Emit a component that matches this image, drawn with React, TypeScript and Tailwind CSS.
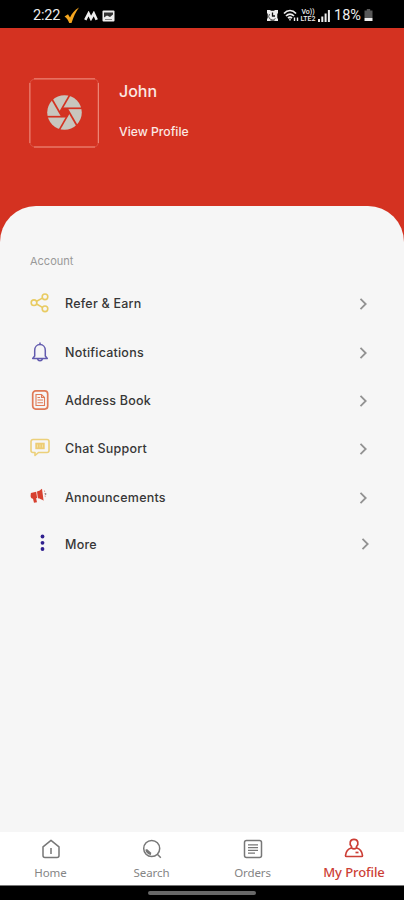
import type { ReactNode } from 'react'

type MenuItem = {
  label: string
  icon: ReactNode
  row?: string
  arrow?: string
}

function ShareIcon() {
  return (
    <svg width="20" height="20" viewBox="0 0 20 20" fill="none" stroke="#e8cb62" strokeWidth="1.6">
      <circle cx="4" cy="9.7" r="2.8" />
      <circle cx="15" cy="3.8" r="2.8" />
      <circle cx="15" cy="15.8" r="2.8" />
      <path d="M6.6 8.3l5.8-3.2M6.6 11l5.8 3.4" />
    </svg>
  )
}

function BellIcon() {
  return (
    <svg width="20" height="20" viewBox="0 0 20 20" fill="none" stroke="#625bae" strokeWidth="1.5" strokeLinejoin="round">
      <path d="M4.7 14V8.4C4.7 4.8 7 2.6 10 2.6s5.3 2.2 5.3 5.8V14l2 2.4H2.7L4.7 14z" />
      <path d="M10 .4v2.200M7.5 16.8c.4 1.4 1.3 2 2.5 2s2.1-.6 2.5-2" />
    </svg>
  )
}

function AddressIcon() {
  return (
    <svg width="20" height="20" viewBox="0 0 20 20" fill="none" stroke="#e07a57">
      <rect x="2.7" y=".9" width="15" height="18.2" rx="3" strokeWidth="1.7" />
      <path d="M6 4.500h5.500l3 3v8H6z" strokeWidth="1.1" />
      <path d="M11.500 4.500v3h3M7.500 7.500h2.500M7.500 10h5.500M7.500 12.700h5.500" strokeWidth="1.1" />
    </svg>
  )
}

function ChatIcon() {
  return (
    <svg width="20" height="20" viewBox="0 0 20 20" fill="none" stroke="#ecd07a" strokeWidth="1.6" strokeLinejoin="round">
      <path d="M3 1.500h14a2 2 0 012 2v9a2 2 0 01-2 2H8.500L5 17.500v-3H3a2 2 0 01-2-2v-9a2 2 0 012-2z" />
      <rect x="5.300" y="4.700" width="9.400" height="6.500" fill="#edcc75" stroke="none" />
      <path d="M7.500 6.500v3M10 6.500v3M12.500 6.500v3" stroke="#f5e5ac" strokeWidth=".8" />
    </svg>
  )
}

function MegaphoneIcon() {
  return (
    <svg width="20" height="20" viewBox="0 0 20 20" fill="#d7402f">
      <path d="M.9 6l5.300-1.200.9 6.200-1 .2.900 4-3 .5-1-4C1.600 11.600.6 10.700.6 9z" />
      <path d="M7 4.600C9.200 4 10.600 3 12 1.800l1.600 12c-1.800-1.400-3.600-2.100-5.700-2.500z" />
      <path d="M14.500 3.500l.9 7.500" stroke="#e69b92" strokeWidth="1" strokeDasharray="1.500 1" />
      <circle cx="15.700" cy="7" r=".7" fill="#555" />
    </svg>
  )
}

function DotsIcon() {
  return (
    <svg width="20" height="20" viewBox="0 0 20 20" fill="#30208f">
      <circle cx="12.500" cy="3.500" r="1.900" />
      <circle cx="12.500" cy="9.800" r="1.900" />
      <circle cx="12.500" cy="16" r="1.900" />
    </svg>
  )
}

function Chevron() {
  return (
    <svg width="9" height="12" viewBox="0 0 9 12" fill="none" stroke="#929292" strokeWidth="1.800">
      <path d="M1.500 .8L6.700 6l-5.200 5.200" />
    </svg>
  )
}

const menu: MenuItem[] = [
  { label: 'Refer & Earn', icon: <ShareIcon /> },
  { label: 'Notifications', icon: <BellIcon /> },
  { label: 'Address Book', icon: <AddressIcon /> },
  { label: 'Chat Support', icon: <ChatIcon /> },
  { label: 'Announcements', icon: <MegaphoneIcon /> },
  { label: 'More', icon: <DotsIcon />, row: 'h-[45px]', arrow: 'pr-[34px]' },
]

function StatusBar() {
  return (
    <div className="flex h-7 shrink-0 items-center justify-between bg-black pl-[33px] pr-[31px] pt-[3px] text-[#eeeeee]">
      <div className="flex items-center">
        <span className="w-[31px] whitespace-nowrap font-['Roboto','Noto_Sans',sans-serif] text-[14.500px] tracking-[-0.200px]">2:22</span>
        <svg width="16" height="17" viewBox="0 0 16 17" fill="#f4a51f">
          <path d="M.5 9.500l3.500-2.200 2 3.200C8 6.500 10.500 3 15 .5c-3.500 4.500-5.300 9-7.500 15.500H5.200C4.200 13 2.800 11 .5 9.500z" />
        </svg>
        <svg className="ml-1" width="14" height="10" viewBox="0 0 14 10" fill="none" stroke="currentColor" strokeWidth="2.600">
          <path d="M1.300 8.800L4.600 2.500l2.400 5 2.800-5 2.900 6.300" />
        </svg>
        <svg className="ml-1" width="13" height="12" viewBox="0 0 13 12">
          <rect x=".5" y=".5" width="12" height="11" rx="1" fill="#eee" />
          <path d="M2 2.500h9v2L8 7 5 5.500 2 7.500z" fill="#333" />
          <path d="M3 9.500h7" stroke="#888" />
        </svg>
      </div>
      <div className="flex items-center">
        <svg width="13" height="13" viewBox="0 0 13 13">
          <path d="M1 1h3l1 .7h3L9 1h3v3l-.7 1v4l.7 1v2H9l-1-.5H5L4 12H1v-2l.7-1V5L1 4z" fill="#eee" />
          <path d="M6.500 3.500V7H9" fill="none" stroke="#111" strokeWidth="1.300" />
          <path d="M3.500 5a3.500 3.500 0 006 4.500" fill="none" stroke="#555" />
        </svg>
        <svg className="ml-1" width="17" height="13" viewBox="0 0 17 13" fill="none" stroke="currentColor" strokeWidth="1.700">
          <path d="M1 4.500c3.500-4 8.500-4 12 0M3 7c2.400-2.500 5.600-2.500 8 0M5 9.200c1.200-1.200 2.800-1.200 4 0" />
          <path d="M7 9.500v2M11.500 12V8.500M14.500 8.500V12" strokeWidth="1.400" />
        </svg>
        <div className="flex h-[14px] w-[16px] flex-col items-center font-['Roboto',sans-serif] text-[7px] font-medium leading-[7px]">
          <span>Vo))</span>
          <span>LTE2</span>
        </div>
        <svg className="ml-[2px]" width="12" height="12" viewBox="0 0 12 12" fill="currentColor">
          <path d="M0 9h2v3H0zM3.300 6.500h2V12h-2zM6.600 3.500h2V12h-2zM9.900 0h2v12h-2z" />
        </svg>
        <span className="ml-[4px] w-[30px] whitespace-nowrap font-['Roboto','Noto_Sans',sans-serif] text-[14.500px]">18%</span>
        <svg width="9" height="13" viewBox="0 0 9 13">
          <path d="M2.800 0h3.400v1.500H8.500V9h-8V1.500h2.300z" fill="#585858" />
          <path d="M.5 9h8v3h-8z" fill="#eee" />
        </svg>
      </div>
    </div>
  )
}

// each blade edge is one side of the centre hexagon, run out to the rim
const bladeAngles = [0, 60, 120, 180, 240, 300]

function Avatar() {
  return (
    <div className="relative flex h-[70px] w-[70px] items-center justify-center">
      <svg className="absolute inset-0" width="70" height="70" viewBox="0 0 70 70" fill="none" stroke="#f29a8b" strokeWidth="1">
        <path d="M5 .9h61M5 69h61M.9 5v60M69.300 5v60" />
        <path d="M.9 5Q1.500 2 5 1M66 1q3 1 3.300 4M.9 65q.6 3 4.100 4M66 69q3-1 3.300-4" stroke="#dc5242" />
      </svg>
      <svg width="36" height="36" viewBox="-18.500 -17.500 36 36">
        <circle r="17.300" fill="#c8c6be" />
        <path d="M-2.500-4.400h5L5.100 0 2.500 4.400h-5L-5.100 0z" fill="#d43221" />
        {bladeAngles.map((angle) => (
          <path key={angle} d="M-2.500-4.200H18" transform={`rotate(${angle})`} stroke="#d43221" strokeWidth="1.700" />
        ))}
      </svg>
    </div>
  )
}

function BottomNav() {
  return (
    <nav className="grid h-[53px] shrink-0 grid-cols-4 bg-white font-['Noto_Sans',sans-serif] text-[11.500px] tracking-[-0.100px] text-[#858585]">
      <div className="flex flex-col items-center pt-[7px]">
        <svg width="20" height="20" viewBox="0 0 20 20" fill="none" stroke="#777" strokeWidth="1.500" strokeLinejoin="round">
          <path d="M2 7.800L10 1.300l8 6.500v8.700a2 2 0 01-2 2H4a2 2 0 01-2-2zM10 9v6" />
        </svg>
        <span className="mt-[6px] leading-4">Home</span>
      </div>
      <div className="flex flex-col items-center pt-[7px]">
        <svg width="20" height="20" viewBox="0 0 20 20" fill="none" stroke="#777" strokeWidth="1.500">
          <circle cx="9.700" cy="9.500" r="8" />
          <path d="M15.300 15.200l3.500 3.500M4 10.500c.6 2.500 2.200 4.200 5 4.700M4.500 10.500l4.500 4" />
        </svg>
        <span className="mt-[6px] leading-4">Search</span>
      </div>
      <div className="flex flex-col items-center pt-[7px]">
        <svg width="20" height="20" viewBox="0 0 20 20" fill="none" stroke="#777" strokeWidth="1.500">
          <rect x="1.500" y="1.500" width="17" height="17" rx="2" />
          <path d="M5 5.800h10M5 8.600h10M5 11.400h10M5 14.200h7" strokeWidth="1.200" />
        </svg>
        <span className="mt-[6px] leading-4">Orders</span>
      </div>
      <div className="flex flex-col items-center pl-px pt-[6px] text-[#cc3e35]">
        <svg width="20" height="20" viewBox="0 0 20 20" fill="none" stroke="currentColor" strokeWidth="1.700" strokeLinejoin="round">
          <path d="M7.500 10C3.800 10.800 2 13 1.500 17.500q0 1 1 1h15q1 0 1-1C18 13 16.200 10.800 12.500 10" />
          <path d="M7.500 10V8.500C5 6 5.800 1.400 10 1.400s5 4.600 2.500 7.100V10q-2.500 1.700-5 0z" />
          <path d="M11.500 14.500h3" />
        </svg>
        <span className="mt-[6px] whitespace-nowrap text-[13px] font-medium leading-4">My Profile</span>
      </div>
    </nav>
  )
}

export default function App() {
  return (
    <div className="flex h-[900px] w-[404px] flex-col overflow-hidden bg-[#d43221]">
      <StatusBar />
      <header className="flex h-[178px] shrink-0 pl-[29px] pt-[50px]">
        <Avatar />
        <div className="flex flex-col pl-5 font-['Inter',sans-serif] text-[#fbe9e4]">
          <span className="mt-[3px] text-[16px] font-medium leading-5">John</span>
          <span className="mt-[23px] text-[12.200px] font-medium leading-4">View Profile</span>
        </div>
      </header>
      <main className="min-h-0 flex-1 rounded-t-[36px] bg-[#f6f6f6] pt-[47px] font-['Inter',sans-serif]">
        <h2 className="pl-[30px] text-[11px] leading-4 text-[#999999]">Account</h2>
        <ul className="mt-[11px]">
          {menu.map((item) => (
            <li key={item.label} className={`flex items-center pl-[30px] ${item.row ?? 'h-[48.400px]'} ${item.arrow ?? 'pr-[36px]'}`}>
              <span className="-mt-0.5 w-[35px]">{item.icon}</span>
              <span className="flex-1 pt-px text-[12.500px] font-medium tracking-[0.220px] text-[#373737]">{item.label}</span>
              <Chevron />
            </li>
          ))}
        </ul>
      </main>
      <BottomNav />
      <footer className="flex h-[15px] shrink-0 justify-center border-t border-[#777777] bg-black pt-[5px]">
        <div className="h-[4px] w-[108px] rounded-full bg-[#686868]" />
      </footer>
    </div>
  )
}
